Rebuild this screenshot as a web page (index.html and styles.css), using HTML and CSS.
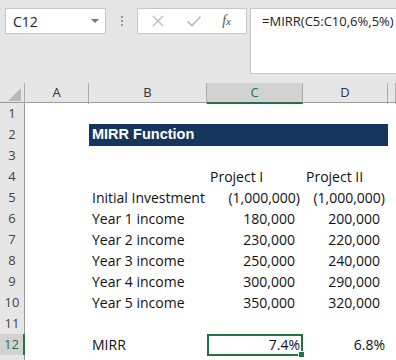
FILE: index.html
```html
<!DOCTYPE html>
<html lang="en">
<head>
    <meta charset="UTF-8">
    <meta name="viewport" content="width=device-width, initial-scale=1.0">
    <title>MIRR Function</title>
    <link rel="stylesheet" href="styles.css">
</head>
<body>
    <div class="toolbar">
        <div class="name-box">
            <span>C12</span>
            <span class="caret"></span>
        </div>
        <div class="grip">
            <span></span><span></span><span></span>
        </div>
        <div class="buttons">
            <svg width="14" height="14" viewBox="0 0 14 14"><path d="M2 2 L12 12 M12 2 L2 12" stroke="#bdbdbd" stroke-width="1.3" fill="none"/></svg>
            <svg width="16" height="14" viewBox="0 0 16 14"><path d="M1.5 7.5 L6 11.5 L14.5 2.5" stroke="#bdbdbd" stroke-width="1.8" fill="none"/></svg>
            <span class="fx"><i>f</i><i class="x">x</i></span>
        </div>
        <div class="formula">=MIRR(C5:C10,6%,5%)</div>
    </div>

    <div class="sheet">
        <div class="row head">
            <div class="corner"><span></span></div>
            <div class="col">A</div>
            <div class="col">B</div>
            <div class="col active">C</div>
            <div class="col">D</div>
            <div class="col"></div>
        </div>
        <div class="row"><div class="num">1</div></div>
        <div class="row">
            <div class="num">2</div>
            <div></div>
            <div class="title">MIRR Function</div>
        </div>
        <div class="row"><div class="num">3</div></div>
        <div class="row">
            <div class="num">4</div>
            <div></div>
            <div></div>
            <div class="cell">Project I</div>
            <div class="cell">Project II</div>
        </div>
        <div class="row">
            <div class="num">5</div>
            <div></div>
            <div class="cell">Initial Investment</div>
            <div class="cell right">(1,000,000)</div>
            <div class="cell right">(1,000,000)</div>
        </div>
        <div class="row">
            <div class="num">6</div>
            <div></div>
            <div class="cell">Year 1 income</div>
            <div class="cell right amt">180,000</div>
            <div class="cell right amt">200,000</div>
        </div>
        <div class="row">
            <div class="num">7</div>
            <div></div>
            <div class="cell">Year 2 income</div>
            <div class="cell right amt">230,000</div>
            <div class="cell right amt">220,000</div>
        </div>
        <div class="row">
            <div class="num">8</div>
            <div></div>
            <div class="cell">Year 3 income</div>
            <div class="cell right amt">250,000</div>
            <div class="cell right amt">240,000</div>
        </div>
        <div class="row">
            <div class="num">9</div>
            <div></div>
            <div class="cell">Year 4 income</div>
            <div class="cell right amt">300,000</div>
            <div class="cell right amt">290,000</div>
        </div>
        <div class="row">
            <div class="num">10</div>
            <div></div>
            <div class="cell">Year 5 income</div>
            <div class="cell right amt">350,000</div>
            <div class="cell right amt">320,000</div>
        </div>
        <div class="row"><div class="num">11</div></div>
        <div class="row">
            <div class="num active">12</div>
            <div></div>
            <div class="cell">MIRR</div>
            <div class="cell right selected">7.4%<span class="handle"></span></div>
            <div class="cell right">6.8%</div>
        </div>
        <div class="row"><div class="num"></div></div>
    </div>
</body>
</html>
```

FILE: styles.css
```css
body {
    margin: 0;
    width: 396px;
    height: 360px;
    overflow: hidden;
    background: #fff;
    font-family: "Open Sans", "Liberation Sans", sans-serif;
}
.toolbar {
    height: 83px;
    background: #e6e6e6;
    display: flex;
    align-items: flex-start;
    padding-top: 8px;
    box-sizing: border-box;
}
.name-box {
    margin-left: 5px;
    width: 101px;
    height: 26px;
    box-sizing: border-box;
    background: #fff;
    border: 1px solid #c6c6c6;
    display: flex;
    align-items: center;
    justify-content: space-between;
    padding: 0 6px 0 7px;
    font-size: 14px;
    color: #222;
}
.caret {
    width: 0;
    height: 0;
    border-left: 4px solid transparent;
    border-right: 4px solid transparent;
    border-top: 4px solid #777;
}
.grip {
    width: 31px;
    height: 26px;
    display: flex;
    flex-direction: column;
    align-items: center;
    justify-content: center;
    gap: 2px;
}
.grip span {
    width: 2px;
    height: 2px;
    background: #9a9a9a;
}
.buttons {
    width: 110px;
    height: 26px;
    box-sizing: border-box;
    background: #fff;
    border: 1px solid #c6c6c6;
    display: flex;
    align-items: center;
    justify-content: space-between;
    padding: 0 15px 0 13px;
}
.fx {
    font-family: "Liberation Serif", serif;
    font-size: 14px;
    color: #555;
}
.fx .x {
    font-size: 11px;
}
.formula {
    margin-left: 3px;
    flex: 1;
    height: 66px;
    box-sizing: border-box;
    background: #fff;
    border: 1px solid #c6c6c6;
    border-right: none;
    padding: 3px 0 0 11px;
    font-size: 13px;
    color: #222;
    white-space: nowrap;
    overflow: hidden;
}
.sheet {
    font-size: 14px;
    color: #111;
}
.row {
    display: grid;
    grid-template-columns: 25px 64px 118px 96px 85px 1fr;
    height: 21px;
}
.row.head {
    height: 20px;
    background: #e6e6e6;
    border-bottom: 1px solid #9b9b9b;
    box-sizing: border-box;
}
.corner {
    border-right: 1px solid #ababab;
    position: relative;
}
.corner span {
    position: absolute;
    right: 3px;
    bottom: 3px;
    width: 0;
    height: 0;
    border-left: 13px solid transparent;
    border-bottom: 13px solid #b8b8b8;
}
.col {
    border-right: 1px solid #ababab;
    text-align: center;
    font-size: 13px;
    line-height: 19px;
    color: #333;
}
.col.active {
    background: #d2d2d2;
    border-bottom: 2px solid #217346;
    color: #217346;
}
.num {
    background: #e6e6e6;
    border-right: 1px solid #9b9b9b;
    border-bottom: 1px solid #c8c8c8;
    text-align: center;
    font-size: 13px;
    line-height: 21px;
    color: #444;
}
.num.active {
    background: #d2d2d2;
    border-right: 2px solid #217346;
    color: #217346;
}
.title {
    grid-column: 3 / 6;
    background: #17365d;
    color: #fff;
    font-family: "Liberation Sans", sans-serif;
    font-weight: bold;
    font-size: 14.5px;
    line-height: 21px;
    padding-left: 3px;
}
.cell {
    padding: 0 3px;
    line-height: 21px;
    white-space: nowrap;
}
.right {
    text-align: right;
}
.amt {
    padding-right: 8px;
}
.selected {
    position: relative;
    border: 2px solid #217346;
    line-height: 17px;
    padding-right: 1px;
}
.handle {
    position: absolute;
    right: -4px;
    bottom: -4px;
    width: 5px;
    height: 5px;
    background: #217346;
    border: 1px solid #fff;
}
```
